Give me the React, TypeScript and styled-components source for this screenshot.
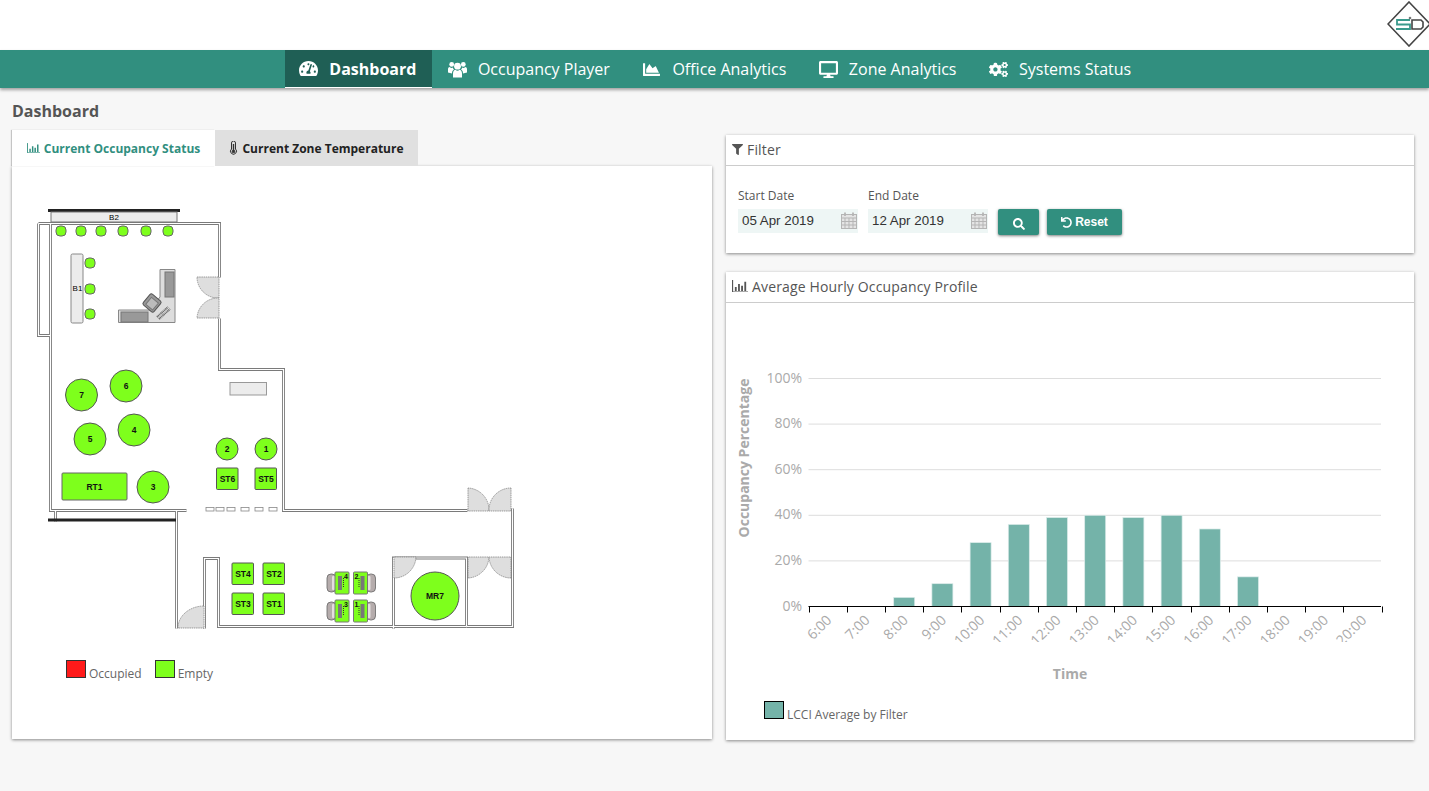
import React from 'react';
import styled, { createGlobalStyle } from 'styled-components';
import { FaTachometerAlt, FaChartArea, FaDesktop, FaCogs, FaFilter, FaSearch, FaUndo } from 'react-icons/fa';

const Global = createGlobalStyle`
  html, body { margin: 0; padding: 0; background: #f7f7f7; }
  body { font-family: "Open Sans", "Noto Sans", sans-serif; color: #555; }
  * { box-sizing: border-box; }
`;
const Page = styled.div`width: 1429px; height: 791px; overflow: hidden; background: #f7f7f7;`;
const TopBar = styled.header`height: 50px; background: #fff; display: flex; justify-content: flex-end; align-items: flex-start; padding: 1px 0 0;`;
const Logo = styled.svg`width: 44px; height: 46px; display: block; margin-right: -2px;`;
const Nav = styled.nav`height: 38px; background: #318f7f; display: flex; justify-content: center; padding-left: 3px; box-shadow: 0 2px 3px rgba(0,0,0,.35); position: relative;`;
const NavItem = styled.a<{ $active?: boolean }>`
  display: flex; align-items: center; gap: 11px; height: 38px;
  padding: 0 ${p => (p.$active ? 15.5 : 16.5)}px 0 ${p => (p.$active ? 14 : 16)}px;
  margin-left: ${p => (p.$active ? 1 : 0)}px;
  color: #fff; font-size: 16px; white-space: nowrap;
  font-weight: ${p => (p.$active ? 700 : 400)};
  background: ${p => (p.$active ? '#1f5f55' : 'transparent')};
  border-bottom: ${p => (p.$active ? '1px solid #fff' : '0')};
  svg { width: 19px; height: 17px; flex: none; }
`;
const Main = styled.main`padding: 12px 15px 0 12px;`;
const Title = styled.h1`margin: 0 0 8px; font-size: 16px; line-height: 22px; font-weight: 700; color: #555;`;
const Columns = styled.div`display: grid; grid-template-columns: 700px 688px; column-gap: 14px; align-items: start;`;
const Tabs = styled.div`display: flex; height: 36px;`;
const Tab = styled.div<{ $active?: boolean }>`
  width: 203px; display: flex; align-items: center; justify-content: center; gap: 4px; font-size: 12px; font-weight: 700; white-space: nowrap;
  background: ${p => (p.$active ? '#fff' : '#e0e0e0')}; color: ${p => (p.$active ? '#318f7f' : '#222')};
  box-shadow: ${p => (p.$active ? '-1px 0 1px rgba(0,0,0,.2)' : 'none')};
  svg { flex: none; }
`;
const TabPanel = styled.section`height: 573px; background: #fff; box-shadow: 0 1px 3px rgba(0,0,0,.45); padding: 24px 0 0 18px;`;
const Plan = styled.svg`display: block; width: 500px; height: 450px; font-family: "Liberation Sans", Arial, sans-serif;`;
const Legend = styled.div`display: flex; align-items: flex-end; margin: 20px 0 0 36px; font-size: 12px; color: #666;`;
const Swatch = styled.span<{ $c: string }>`width: 20px; height: 18px; background: ${p => p.$c}; border: 1px solid #333; margin-right: 3px;`;
const LegendText = styled.span`margin-right: 13px; line-height: 15px; position: relative; top: 3px;`;
const Side = styled.div`display: flex; flex-direction: column; gap: 19px; padding-top: 5px;`;
const Card = styled.section<{ $h: number }>`height: ${p => p.$h}px; background: #fff; box-shadow: 0 1px 3px rgba(0,0,0,.45);`;
const CardHead = styled.div`height: 31px; border-bottom: 1px solid #ccc; display: flex; align-items: center; gap: 4px; padding: 0 6px 2px; font-size: 14px; font-weight: 500; letter-spacing: .15px; color: #555; svg { flex: none; }`;
const FilterRow = styled.div`display: flex; align-items: flex-end; padding: 22px 12px 0; gap: 8px;`;
const Field = styled.div`width: 122px; display: flex; flex-direction: column; gap: 5px; font-size: 12px; font-weight: 500; color: #555; line-height: 16px;`;
const DateBox = styled.div`width: 120px; height: 24px; background: #eef6f5; display: flex; align-items: center; justify-content: space-between; padding: 0 1px 2px 4px; font: 13.33px "Liberation Sans", Arial, sans-serif; color: #333; svg { flex: none; }`;
const Button = styled.button<{ $w: number }>`width: ${p => p.$w}px; height: 26px; margin-bottom: -2px; border: 0; border-radius: 2px; background: #318f7f; color: #fff; display: flex; align-items: center; justify-content: center; gap: 3px; padding: 0; font: 700 12px "Liberation Sans", Arial, sans-serif; box-shadow: 0 1px 3px rgba(0,0,0,.5); svg { width: 11px; height: 11px; }`;
const SearchMark = styled.span`display: flex; padding-top: 3px; svg { width: 12px; height: 12px; }`;
const Chart = styled.svg`display: block; width: 688px; height: 437px; font-family: "Open Sans", sans-serif;`;

const BarIcon = ({ size = 16 }: { size?: number }) => (
  <svg width={size} height={size * 0.8} viewBox="0 0 14 11"><path d="M.5 0v10.500H14" fill="none" stroke="currentColor" /><path d="M2.500 6h1.600v3.500H2.500zM5.300 3.500h1.600v6H5.300zM8 5h1.600v4.500H8zM10.800 1.500h1.600v8h-1.600z" fill="currentColor" /></svg>
);
const UsersIcon = () => (
  <svg viewBox="0 0 19 17" fill="currentColor">
    <circle cx="9.500" cy="5.200" r="3.400" /><circle cx="3.700" cy="3.400" r="2.400" /><circle cx="15.300" cy="3.400" r="2.400" />
    <path d="M5 16.500v-4c0-2.500 1.300-3.800 2.500-3.800.6.500 1.200 1 2 1s1.400-.5 2-1c1.200 0 2.500 1.300 2.500 3.800v4z" />
    <path d="M0 11.500V8.200c0-1.300.8-2.200 1.800-2.200.5.500 1.100.9 1.900.9.400 0 .8-.1 1.100-.3.200 1 .6 1.500 1.200 2-1.300.7-2 2-2 3.900zM19 11.500V8.200c0-1.300-.8-2.200-1.800-2.200-.5.500-1.100.9-1.900.9-.4 0-.8-.1-1.100-.3-.2 1-.6 1.500-1.200 2 1.300.7 2 2 2 3.900z" />
  </svg>
);
const ThermoIcon = () => (
  <svg width="9" height="14" viewBox="0 0 9 14" fill="none" stroke="#333">
    <path d="M2.500 8V2a2 2 0 0 1 4 0v6a3 3 0 1 1-4 0z" strokeWidth="1" />
    <path d="M4.500 3v7" strokeWidth="1.400" /><circle cx="4.500" cy="10.500" r="1.300" fill="#333" />
  </svg>
);
const CalIcon = () => (
  <svg width="16" height="17" viewBox="0 0 16 17" fill="none" stroke="#b5b5b5">
    <rect x=".5" y="2.500" width="15" height="14" fill="#e4e4e4" /><path d="M.5 6h15M.5 9.500h15M.5 13h15M4 6v10.500M8 6v10.500M12 6v10.500" />
    <path d="M4 .5v3.500M12 .5v3.500" strokeWidth="1.800" />
  </svg>
);

const G = '#7eff1c';
const wall = [
  'M38 223H219V277', 'M219 318V369H283V510H467', 'M50 223V510H186', 'M38 223V335H50',
  'M176 510V628', 'M204 628V558H218V626H393', 'M393 628V557.500H466V626', 'M393 626H466', 'M466 626H512V508', 'M55 510V521',
];
const seats = [61, 81, 101, 123, 146, 168].map(x => [x, 231]).concat([[90, 263], [90, 289], [90, 314]]);
const circles: [number, number, number, string][] = [[81.5, 395, 16, '7'], [126, 386, 16, '6'], [90, 439, 16, '5'], [134, 430, 16, '4'], [153, 487, 16, '3'], [227, 449, 11, '2'], [266, 449, 11, '1'], [435, 596, 24, 'MR7']];
const stations: [number, number, string][] = [[216.5, 468, 'ST6'], [255, 468, 'ST5'], [232, 563, 'ST4'], [263, 563, 'ST2'], [232, 593, 'ST3'], [263, 593, 'ST1']];
const doors = [
  'M197 277H219V298A21 21 0 0 1 197 277Z', 'M197 318H219V298A21 21 0 0 0 197 318Z',
  'M468 488V511H489A22 22 0 0 0 468 488Z', 'M511 488V511H489A22 22 0 0 1 511 488Z',
  'M468 578V557H489A22 22 0 0 1 468 578Z', 'M511 578V557H489A22 22 0 0 0 511 578Z',
  'M394 578V557H416A22 22 0 0 1 394 578Z', 'M178 628V627A26 22 0 0 1 204 606V628Z',
];
const dashes = [206, 216, 227, 241, 255, 269];

const Desk = ({ x, y, label, flip }: { x: number; y: number; label: string; flip: boolean }) => {
  const chairX = flip ? x + 13 : x - 8;
  return (
    <g>
      <rect x={chairX} y={y + 2} width="9" height="18" rx="4" fill="#b5acac" stroke="#666" strokeWidth=".8" />
      <rect x={flip ? chairX + 1 : chairX + 5} y={y + 4} width="3" height="14" rx="1" fill="#e4dede" />
      <rect x={x} y={y} width="14" height="22" rx="1" fill={G} stroke="#777" />
      <rect x={flip ? x + 7 : x + 3} y={y + 4} width="4" height="14" fill="#777" />
      <path d={flip ? `M${x + 5.500} ${y + 6}v10` : `M${x + 8.500} ${y + 6}v10`} stroke="#333" strokeDasharray="1 1" />
      <text x={flip ? x + 3 : x + 11} y={y + 7} fontSize="7" fontWeight="700" fill="#111" textAnchor="middle">{label}</text>
    </g>
  );
};

const FloorPlan = () => (
  <Plan viewBox="30 190 500 450">
    <g transform="translate(.5 .5)">
      {wall.map(d => <path key={d} d={d} fill="none" stroke="#7a7a7a" strokeWidth="3" />)}
      {wall.map(d => <path key={d + 'w'} d={d} fill="none" stroke="#fff" strokeWidth="1.200" />)}
    </g>
    {doors.map(d => <path key={d} d={d} fill="#dedede" stroke="#777" strokeWidth=".7" strokeDasharray="1.500 .7" />)}
    <rect x="48" y="209" width="132" height="3" fill="#222" />
    <rect x="51" y="212" width="126" height="10" fill="#ececec" stroke="#777" />
    <text x="114" y="220" fontSize="8" fill="#000" textAnchor="middle">B2</text>
    <rect x="48" y="518.500" width="128" height="3" fill="#222" />
    <rect x="71" y="254" width="12" height="69" rx="1.500" fill="#ececec" stroke="#888" />
    <text x="77.500" y="291" fontSize="8" fill="#000" textAnchor="middle">B1</text>
    {seats.map(([x, y]) => <rect key={`${x}-${y}`} x={x - 5} y={y - 5} width="10" height="10" rx="4" fill={G} stroke="#666" />)}
    <path d="M160 269.500H175V322.500H118.500V310H150L160 297Z" fill="#ddd" stroke="#888" />
    <rect x="165" y="272" width="9" height="25" fill="#999" stroke="#777" />
    <rect x="121" y="312" width="27" height="10" fill="#999" stroke="#777" />
    <g transform="rotate(40 152 303)"><rect x="145" y="296" width="14" height="14" rx="2" fill="#999" stroke="#555" /><rect x="148" y="299" width="9" height="9" fill="#bbb" stroke="#777" /></g>
    <path d="M157 317l11-10M159 319l11-10" stroke="#666" strokeWidth="2" strokeDasharray="1 .6" />
    <rect x="230" y="382.500" width="36.500" height="12.500" fill="#ececec" stroke="#999" />
    {dashes.map(x => <rect key={x} x={x} y="507.500" width="8" height="3.500" fill="#fff" stroke="#888" strokeWidth=".8" />)}
    {circles.map(([x, y, r, t]) => (
      <g key={t}><circle cx={x} cy={y} r={r} fill={G} stroke="#555" /><text x={x} y={y + 3} fontSize="8.500" fontWeight="700" fill="#111" textAnchor="middle">{t}</text></g>
    ))}
    <rect x="62" y="473" width="65" height="27" rx="1" fill={G} stroke="#666" />
    <text x="94.500" y="490" fontSize="8.500" fontWeight="700" fill="#111" textAnchor="middle">RT1</text>
    {stations.map(([x, y, t]) => (
      <g key={t}><rect x={x} y={y} width="21.500" height="21.500" rx="1" fill={G} stroke="#555" /><text x={x + 11} y={y + 14} fontSize="8.500" fontWeight="700" fill="#111" textAnchor="middle">{t}</text></g>
    ))}
    <Desk x={335} y={572} label="4" flip={false} />
    <Desk x={353.500} y={572} label="2" flip />
    <Desk x={335} y={600} label="3" flip={false} />
    <Desk x={353.500} y={600} label="1" flip />
  </Plan>
);

const hours = ['6:00', '7:00', '8:00', '9:00', '10:00', '11:00', '12:00', '13:00', '14:00', '15:00', '16:00', '17:00', '18:00', '19:00', '20:00'];
const values = [0, 0, 4, 10, 28, 36, 39, 40, 39, 40, 34, 13, 0, 0, 0];
const X0 = 808.5;
const BAND = 38.2;
const Y0 = 606.5;

const HourlyChart = () => (
  <Chart viewBox="726 303 688 437">
    <defs><clipPath id="ticks"><rect x="790" y="608" width="610" height="34" /></clipPath></defs>
    {[20, 40, 60, 80, 100].map(v => <line key={v} x1={X0} x2="1381" y1={Y0 - v * 2.28} y2={Y0 - v * 2.28} stroke="#ddd" />)}
    {[0, 20, 40, 60, 80, 100].map(v => <text key={v} x="802" y={Y0 - v * 2.28 + 4} fontSize="14" fill="#aaa" textAnchor="end">{v}%</text>)}
    {values.map((v, i) => v > 0 && (
      <rect key={i} x={X0 + BAND * i + 8.800} y={Y0 - v * 2.28} width="21" height={v * 2.28} fill="#74b3a9" stroke="#dcecea" strokeWidth=".7" />
    ))}
    <line x1={X0} x2="1381" y1={Y0} y2={Y0} stroke="#000" />
    {Array.from({ length: 16 }, (_, i) => <line key={i} x1={Math.round(X0 + BAND * i) + .5} x2={Math.round(X0 + BAND * i) + .5} y1={Y0} y2={Y0 + 6} stroke="#000" />)}
    <g clipPath="url(#ticks)">
      {hours.map((h, i) => (
        <text key={h} x={X0 + BAND * i + 24} y={621} fontSize="14" fill="#aaa" textAnchor="end" transform={`rotate(-45 ${X0 + BAND * i + 24} 621)`}>{h}</text>
      ))}
    </g>
    <text x="749" y="458" fontSize="14" fontWeight="700" fill="#aaa" textAnchor="middle" transform="rotate(-90 749 458)">Occupancy Percentage</text>
    <text x="1070" y="679" fontSize="14" fontWeight="700" fill="#aaa" textAnchor="middle">Time</text>
    <rect x="764.500" y="701.500" width="19" height="17" fill="#74b3a9" stroke="#000" />
    <text x="787" y="719" fontSize="12" fill="#666">LCCI Average by Filter</text>
  </Chart>
);

export default function App() {
  return (
    <Page>
      <Global />
      <TopBar>
        <Logo viewBox="0 0 44 46" aria-label="SD logo">
          <path d="M22 1L43 23 22 45 1 23Z" fill="#fff" stroke="#444" strokeWidth="1.600" />
          <path d="M23 19H10v4.500h13V28H9" fill="none" stroke="#3a9a8c" strokeWidth="1.800" />
          <path d="M25 19h9l2 2v5l-2 2h-9Z" fill="none" stroke="#444" strokeWidth="1.600" />
          <circle cx="23" cy="17" r="1.300" fill="#777" />
        </Logo>
      </TopBar>
      <Nav>
        <NavItem $active><FaTachometerAlt />Dashboard</NavItem>
        <NavItem><UsersIcon />Occupancy Player</NavItem>
        <NavItem><FaChartArea />Office Analytics</NavItem>
        <NavItem><FaDesktop />Zone Analytics</NavItem>
        <NavItem><FaCogs />Systems Status</NavItem>
      </Nav>
      <Main>
        <Title>Dashboard</Title>
        <Columns>
          <div>
            <Tabs>
              <Tab $active><BarIcon size={13} />Current Occupancy Status</Tab>
              <Tab><ThermoIcon />Current Zone Temperature</Tab>
            </Tabs>
            <TabPanel>
              <FloorPlan />
              <Legend>
                <Swatch $c="#ff1a1a" /><LegendText>Occupied</LegendText>
                <Swatch $c={G} /><LegendText>Empty</LegendText>
              </Legend>
            </TabPanel>
          </div>
          <Side>
            <Card $h={118}>
              <CardHead><FaFilter size={11} />Filter</CardHead>
              <FilterRow>
                <Field>Start Date<DateBox>05 Apr 2019<CalIcon /></DateBox></Field>
                <Field>End Date<DateBox>12 Apr 2019<CalIcon /></DateBox></Field>
                <Button $w={41}><SearchMark><FaSearch /></SearchMark></Button>
                <Button $w={75}><FaUndo />Reset</Button>
              </FilterRow>
            </Card>
            <Card $h={468}>
              <CardHead><BarIcon />Average Hourly Occupancy Profile</CardHead>
              <HourlyChart />
            </Card>
          </Side>
        </Columns>
      </Main>
    </Page>
  );
}
